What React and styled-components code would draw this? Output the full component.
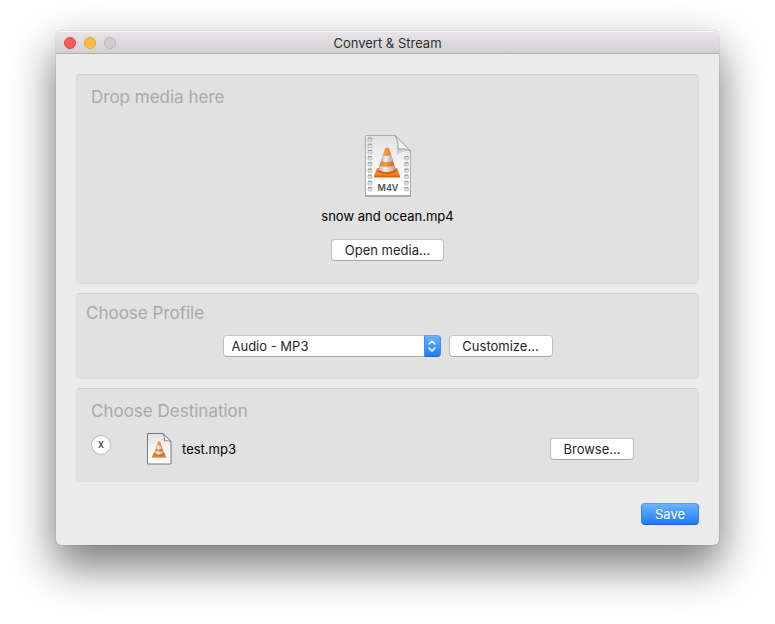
import React from "react";
import styled, { createGlobalStyle, css } from "styled-components";

const GlobalStyle = createGlobalStyle`
  * { box-sizing: border-box; }
  body {
    margin: 0;
    background: #fff;
    color: #000;
    font: 13px/16px Inter, "Liberation Sans", sans-serif;
  }
  button, select { font: inherit; }
`;

const Desktop = styled.div`
  padding: 31px 56px 79px;
  overflow: hidden;
`;

const Window = styled.main`
  border-radius: 5px;
  background: #ebebeb;
  box-shadow: 0 0 1px rgba(0, 0, 0, 0.5), 0 20px 44px 2px rgba(0, 0, 0, 0.52);
`;

const TitleBar = styled.header`
  display: grid;
  grid-template-columns: 1fr auto 1fr;
  align-items: center;
  height: 23px;
  padding: 2px 8px 0;
  border-bottom: 1px solid #b1afb1;
  border-radius: 5px 5px 0 0;
  background: linear-gradient(#e9e7e9, #d1cfd1);
  box-shadow: inset 0 1px 0 #f6f5f6;
`;

const Lights = styled.div`
  display: flex;
  gap: 8px;
`;

const Light = styled.button`
  width: 12px;
  height: 12px;
  padding: 0;
  border: 1px solid ${(p) => p.$edge};
  border-radius: 50%;
  background: ${(p) => p.$fill};
`;

const Title = styled.h1`
  margin: 0;
  font-size: 13px;
  font-weight: 400;
  line-height: 16px;
  color: #303030;
`;

const Content = styled.div`
  display: flex;
  flex-direction: column;
  gap: 9px;
  padding: 20px;
`;

const Panel = styled.section`
  padding: ${(p) => p.$pad};
  border: 1px solid #dcdcdc;
  border-top-color: #cfcfcf;
  border-radius: 4px;
  background: #e1e1e1;
`;

const Heading = styled.h2`
  margin: 0;
  font-size: 17px;
  font-weight: 400;
  line-height: 24px;
  color: #a9a9a9;
`;

const DropZone = styled.div`
  display: flex;
  flex-direction: column;
  align-items: center;
  padding-top: 26px;
`;

const FileName = styled.span`
  margin: 11px 0 15px;
`;

const primary = css`
  border-color: #4a9bf5 #2f83f2 #1c62e8;
  background: linear-gradient(#6cb3fa, #1f7bfb);
  color: #fff;
`;

const PushButton = styled.button`
  width: ${(p) => p.$width};
  height: 22px;
  padding: 0;
  border: 1px solid;
  border-color: #c6c6c6 #bdbdbd #a9a9a9;
  border-radius: 4px;
  background: #fff;
  color: #262626;
  ${(p) => p.$primary && primary}
`;

const ProfileRow = styled.div`
  display: flex;
  justify-content: center;
  gap: 8px;
  padding-top: 10px;
`;

const Popup = styled.div`
  display: grid;
  grid-template-columns: 1fr 17px;
  width: 218px;
  height: 22px;
`;

const ProfileSelect = styled.select`
  grid-area: 1 / 1 / 2 / 3;
  appearance: none;
  padding: 0 26px 0 8px;
  border: 1px solid;
  border-color: #c6c6c6 #bdbdbd #a9a9a9;
  border-radius: 4px;
  background: #fff;
  color: #262626;
`;

const Stepper = styled.span`
  grid-area: 1 / 2;
  display: grid;
  place-items: center;
  border: 1px solid;
  border-color: #5aa6f5 #3d8df3 #1c62e8;
  border-radius: 0 4px 4px 0;
  background: linear-gradient(#6cb3fa, #1f7bfb);
  pointer-events: none;
`;

const DestinationRow = styled.div`
  display: flex;
  align-items: center;
  padding: 10px 49px 0 0;
`;

const ClearButton = styled.button`
  align-self: flex-start;
  width: 20px;
  height: 20px;
  margin: 2px 36px 0 0;
  padding: 0 0 2px;
  border: 1px solid #b9b9b9;
  border-radius: 50%;
  background: #fff;
  color: #262626;
  font-size: 11px;
  line-height: 14px;
`;

const OutputName = styled.span`
  flex: 1;
  margin-left: 10px;
`;

const Footer = styled.footer`
  display: flex;
  justify-content: flex-end;
  padding-top: 12px;
`;

function Cone() {
  return (
    <>
      <path d="M4 22h20l3 8H1z" fill="#f58220" />
      <path d="M1 29.500h26v2H1z" fill="#dd6410" />
      <ellipse cx="14" cy="25" rx="9.500" ry="3" fill="#d95f0c" />
      <path d="M12 2.500q2-2 4 0l7 21.500q-9 4.500-18 0z" fill="url(#coneOrange)" />
      <path d="M9.900 9q4.100 1.800 8.200 0l1.900 6q-6 2.600-12 0z" fill="url(#coneWhite)" />
      <path d="M6.700 19.200q7.300 3.400 14.600 0l1.400 4.600q-8.700 4.200-17.400 0z" fill="url(#coneWhite)" />
    </>
  );
}

function Gradients() {
  return (
    <defs>
      <linearGradient id="coneOrange">
        <stop offset="0" stopColor="#e8670d" />
        <stop offset=".4" stopColor="#ff9d42" />
        <stop offset="1" stopColor="#d95708" />
      </linearGradient>
      <linearGradient id="coneWhite">
        <stop offset="0" stopColor="#b4b4b4" />
        <stop offset=".4" stopColor="#efefef" />
        <stop offset="1" stopColor="#a5a5a5" />
      </linearGradient>
      <linearGradient id="paper" x2="0" y2="1">
        <stop offset="0" stopColor="#e2e2e2" />
        <stop offset=".6" stopColor="#fafafa" />
        <stop offset="1" stopColor="#fff" />
      </linearGradient>
      <linearGradient id="fold" x1="0" y1="1" x2="1" y2="0">
        <stop offset="0" stopColor="#fff" />
        <stop offset=".5" stopColor="#f4f4f4" />
        <stop offset="1" stopColor="#bdbdbd" />
      </linearGradient>
    </defs>
  );
}

function MovieIcon() {
  const holes = Array.from({ length: 9 }, (_, i) => 3 + i * 6.2);
  return (
    <svg width="48" height="62" viewBox="0 0 48 62" aria-hidden="true">
      <Gradients />
      <path d="M1.500 .5H31l15.500 15.500V61h-45z" fill="url(#paper)" stroke="#adadad" />
      <path d="M1 61h46" stroke="#858585" />
      {holes.map((y) => (
        <g key={y} fill="#dcdcdc" stroke="#b4b4b4" strokeWidth=".7">
          <rect x="4" y={y} width="4" height="3.400" rx="1" />
          {y > 16 && <rect x="40.500" y={y} width="4" height="3.400" rx="1" />}
          <path d={`M4 ${y}h4`} stroke="#7c7c7c" />
          {y > 16 && <path d={`M40.500 ${y}h4`} stroke="#7c7c7c" />}
        </g>
      ))}
      <path d="M31 .5l15.500 15.500q-6-1-14 4 2-10-1.500-19.500z" fill="#777" opacity=".25" />
      <path d="M31 .5l15.500 15.500q-6-3.500-12.500-2 1-8-3-13.500z" fill="url(#fold)" stroke="#8d8d8d" strokeWidth=".7" />
      <g transform="translate(9 11)">
        <Cone />
      </g>
      <text x="24" y="56" textAnchor="middle" fontFamily="Inter, sans-serif" fontSize="9" fontWeight="600" fill="#505050">
        M4V
      </text>
    </svg>
  );
}

function FileIcon() {
  return (
    <svg width="25" height="32" viewBox="0 0 25 32" aria-hidden="true">
      <path d="M.5 .5H16l8 8V31H.5z" fill="url(#paper)" stroke="#777" />
      <path d="M16 .5l8 8q-3-1.500-6.500-.5 .5-4-1.500-7.500z" fill="url(#fold)" stroke="#777" strokeWidth=".8" />
      <g transform="translate(4.500 7.500) scale(.54)">
        <Cone />
      </g>
    </svg>
  );
}

export default function App() {
  return (
    <Desktop>
      <GlobalStyle />
      <Window>
        <TitleBar>
          <Lights>
            <Light aria-label="Close" $fill="#fc5b57" $edge="#df4744" />
            <Light aria-label="Minimize" $fill="#fdbc40" $edge="#de9f34" />
            <Light aria-label="Zoom" disabled $fill="#d0ced0" $edge="#b8b6b8" />
          </Lights>
          <Title>Convert &amp; Stream</Title>
        </TitleBar>
        <Content>
          <Panel $pad="10px 14px 22px">
            <Heading>Drop media here</Heading>
            <DropZone>
              <MovieIcon />
              <FileName>snow and ocean.mp4</FileName>
              <PushButton $width="113px">Open media...</PushButton>
            </DropZone>
          </Panel>
          <Panel $pad="7px 9px 21px">
            <Heading id="profile-heading">Choose Profile</Heading>
            <ProfileRow>
              <Popup>
                <ProfileSelect aria-labelledby="profile-heading" defaultValue="mp3">
                  <option value="mp3">Audio - MP3</option>
                </ProfileSelect>
                <Stepper>
                  <svg width="8" height="12" viewBox="0 0 8 12" fill="none" stroke="#fff" strokeWidth="1.5" strokeLinecap="round" strokeLinejoin="round" aria-hidden="true">
                    <path d="M1 4l3-3 3 3M1 8l3 3 3-3" />
                  </svg>
                </Stepper>
              </Popup>
              <PushButton $width="104px">Customize...</PushButton>
            </ProfileRow>
          </Panel>
          <Panel $pad="10px 15px 16px 14px">
            <Heading>Choose Destination</Heading>
            <DestinationRow>
              <ClearButton aria-label="Clear destination">x</ClearButton>
              <FileIcon />
              <OutputName>test.mp3</OutputName>
              <PushButton $width="84px">Browse...</PushButton>
            </DestinationRow>
          </Panel>
          <Footer>
            <PushButton $primary $width="58px">Save</PushButton>
          </Footer>
        </Content>
      </Window>
    </Desktop>
  );
}
